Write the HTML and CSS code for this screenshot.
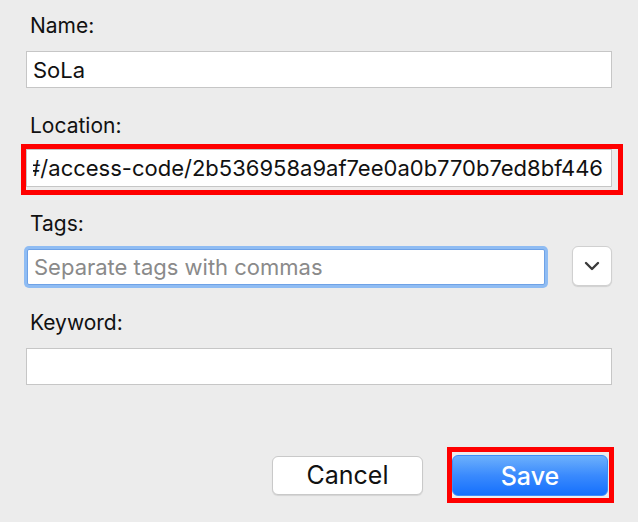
FILE: index.html
```html
<!DOCTYPE html>
<html lang="en">
<head>
<meta charset="utf-8">
<title>Bookmark</title>
<link rel="stylesheet" href="styles.css">
</head>
<body>
<div class="dialog">
  <div class="label l-name">Name:</div>
  <div class="field">SoLa</div>

  <div class="label l-loc">Location:</div>
  <div class="highlight hl-loc">
    <div class="field field-loc"><div class="clip"><span>#/access-code/2b536958a9af7ee0a0b770b7ed8bf446</span></div></div>
  </div>

  <div class="label l-tags">Tags:</div>
  <div class="tags-row">
    <div class="field field-focus placeholder">Separate tags with commas</div>
    <button class="dropdown" type="button" aria-label="Show tags">
      <svg width="16" height="10" viewBox="0 0 16 10"><path d="M2 2 L8 8 L14 2" fill="none" stroke="#3a3a3a" stroke-width="2.4" stroke-linecap="round" stroke-linejoin="round"/></svg>
    </button>
  </div>

  <div class="label l-kw">Keyword:</div>
  <div class="field"></div>

  <div class="actions">
    <button class="btn cancel" type="button">Cancel</button>
    <div class="highlight hl-save"><button class="btn save" type="button">Save</button></div>
  </div>
</div>
</body>
</html>
```

FILE: styles.css
```css
html, body {
  margin: 0;
  background: #ececec;
}

body {
  font-family: Inter, "Liberation Sans", sans-serif;
  color: #111;
  width: 638px;
  height: 522px;
  overflow: hidden;
}

.dialog {
  padding: 0 26px;
}

.label {
  font-size: 21px;
  line-height: 26px;
  height: 26px;
  padding-left: 4px;
}

.l-name { padding-top: 13px; }
.l-loc { margin-top: 25px; }
.l-tags { margin-top: 16px; }
.l-kw { margin-top: 22px; }

.field {
  box-sizing: border-box;
  height: 37px;
  margin-top: 12px;
  background: #fff;
  border: 1px solid #c6c6c6;
  padding: 0 7px 0 6px;
  font-size: 22px;
  display: flex;
  align-items: center;
  white-space: nowrap;
}

.highlight {
  border: 5px solid #ff0000;
}

.hl-loc {
  margin: 5px -11px 0 -5px;
  padding: 0 6px 3px 0;
}

.hl-loc .field {
  margin-top: 0;
  height: 38px;
}

.field-loc .clip {
  flex: 1;
  overflow: hidden;
  display: flex;
  justify-content: flex-end;
  margin-right: 1px;
}

.tags-row {
  display: flex;
  align-items: flex-start;
  margin-top: 9px;
  height: 42px;
}

.field-focus {
  margin: 3px 0 0 1px;
  width: 518px;
  height: 36px;
  border-color: #6fa2e6;
  border-radius: 2px;
  box-shadow: 0 0 0 3px #8fbcf3;
}

.placeholder {
  color: #8a8a8a;
}

.dropdown {
  margin-left: 27px;
  width: 40px;
  height: 40px;
  padding: 0;
  background: #fff;
  border: 1px solid #d0d0d0;
  border-radius: 6px;
  box-shadow: 0 1px 1px rgba(0, 0, 0, 0.12);
  display: flex;
  align-items: center;
  justify-content: center;
}

.actions {
  margin: 62px -2px 0 0;
  display: flex;
  justify-content: flex-end;
  align-items: center;
  gap: 24px;
}

.btn {
  font-family: Inter, "Liberation Sans", sans-serif;
  font-size: 25px;
  border-radius: 6px;
  padding: 0;
  box-sizing: border-box;
}

.cancel {
  width: 151px;
  height: 39px;
  color: #111;
  background: #fff;
  border: 1px solid #c9c9c9;
  box-shadow: 0 1px 1px rgba(0, 0, 0, 0.1);
}

.hl-save {
  padding: 3px 1px 2px 0;
  display: flex;
}

.save {
  width: 156px;
  height: 41px;
  color: #fff;
  font-weight: 500;
  border: 1px solid #3d8cf8;
  background: linear-gradient(#6cb0fc, #3a8afd 50%, #1570fd);
}
```
